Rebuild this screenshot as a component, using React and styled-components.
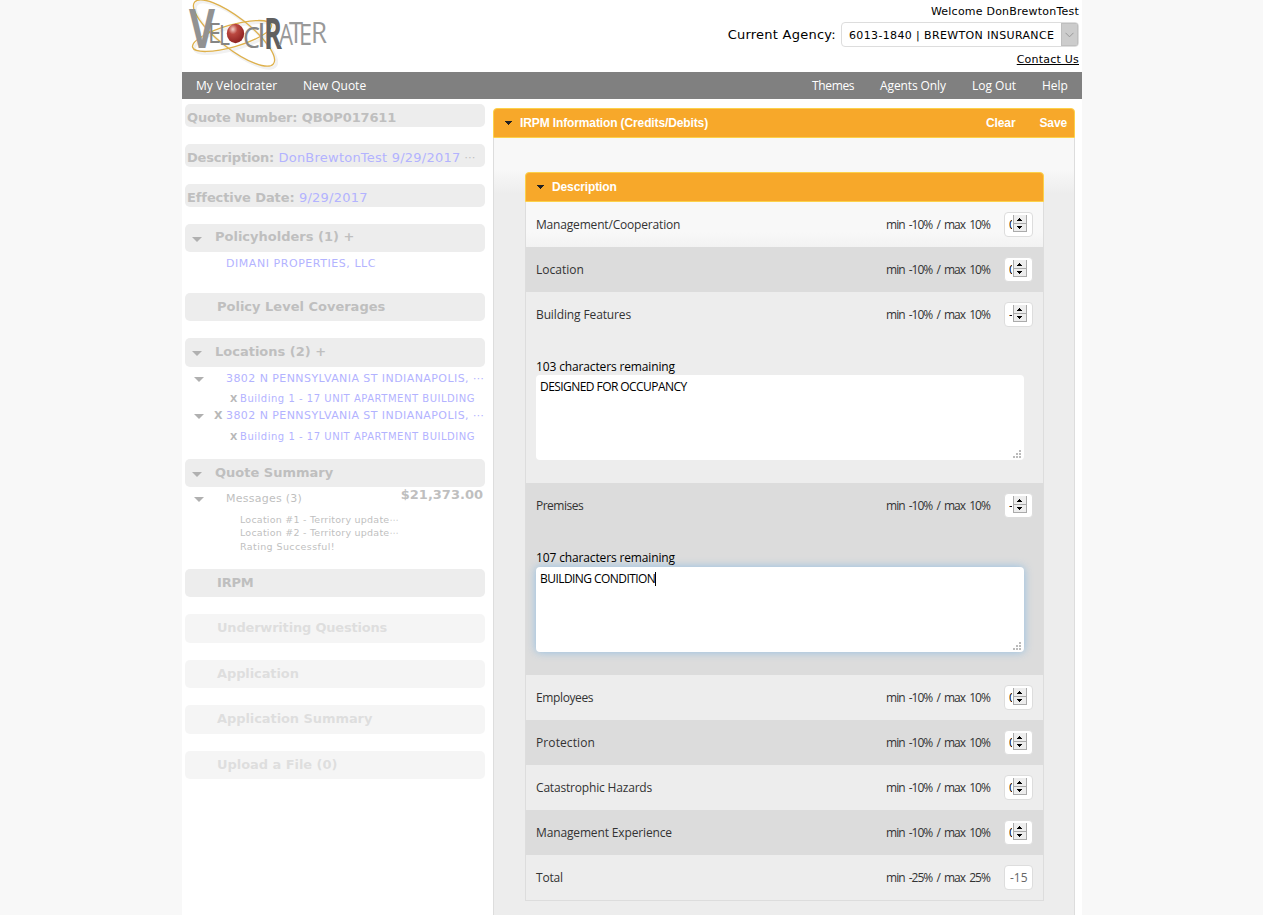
import React from "react";
import styled, { createGlobalStyle, css } from "styled-components";

const Global = createGlobalStyle`
  * { box-sizing: border-box; }
  html, body { margin: 0; height: 915px; overflow: hidden; background: #f8f8f8; }
  body { font-family: "DejaVu Sans", Verdana, sans-serif; color: #000; }
  a { color: inherit; }
`;

const Page = styled.div`
  width: 900px;
  height: 915px;
  margin-left: 182px;
  background: #fff;
  overflow: hidden;
`;
const Header = styled.header`
  height: 72px;
  display: flex;
  justify-content: space-between;
`;
const Logo = styled.svg`
  width: 150px;
  height: 70px;
  margin-left: 2px;
  font-family: "Open Sans", sans-serif;
`;
const Account = styled.div`
  display: flex;
  flex-direction: column;
  align-items: flex-end;
  padding: 4px 3px 0 0;
  font-size: 11px;
  line-height: 16px;
  letter-spacing: 0.22px;
`;
const AgencyRow = styled.label`
  display: flex;
  align-items: center;
  margin: 2px 0 5px;
  gap: 5px;
  font-size: 13px;
  letter-spacing: 0.25px;
`;
const AgencySelect = styled.span`
  display: flex;
  align-items: stretch;
  justify-content: space-between;
  width: 238px;
  height: 25px;
  border: 1px solid #ddd;
  border-radius: 4px;
  padding-left: 7px;
  font-size: 11px;
  line-height: 25px;
  letter-spacing: 0.36px;
  overflow: hidden;
  white-space: nowrap;
`;
const SelectArrow = styled.span`
  flex: none;
  display: flex;
  align-items: center;
  justify-content: center;
  width: 17px;
  background: #ccc;
  border: 1px solid #bfbfbf;
`;
const Nav = styled.nav`
  height: 27px;
  display: flex;
  align-items: center;
  background: #808080;
  color: #fff;
  padding: 0 15px 0 14px;
  gap: 26px;
  font: 12px/27px "Open Sans", "Trebuchet MS", sans-serif;
`;
const NavItem = styled.span`
  width: ${(p) => p.$w}px;
  white-space: nowrap;
  letter-spacing: ${(p) => p.$track || 0}px;
  margin-left: ${(p) => (p.$push ? "auto" : 0)};
`;
const Columns = styled.div`
  display: flex;
  align-items: flex-start;
`;
const Sidebar = styled.aside`
  width: 311px;
  padding: 5px 8px 0 3px;
  color: #bfbfbf;
`;
const Bar = styled.div`
  display: flex;
  align-items: center;
  height: ${(p) => p.$h || 28}px;
  margin-bottom: ${(p) => p.$gap || 17}px;
  padding: 0 0 ${(p) => p.$lift || 1}px ${(p) => p.$indent || 2}px;
  border-radius: 5px;
  background: #ededed;
  font-size: 13px;
  font-weight: bold;
  white-space: pre;
  line-height: 20px;
  letter-spacing: ${(p) => p.$track || 0}px;
  opacity: ${(p) => (p.$faded ? 0.5 : 1)};
  ${(p) => p.$h === 23 && css`padding-top: 4px; padding-bottom: 0;`}
`;
const Value = styled.span`
  color: #b3b3ff;
  font-weight: normal;
  letter-spacing: 0.23px;
`;
const Dots = styled.span`
  margin-left: ${(p) => p.$gap || 0}px;
  font-size: 11px;
  font-weight: normal;
  letter-spacing: 0;
`;
const Toggle = styled.span`
  flex: none;
  width: 0;
  height: 0;
  margin: ${(p) => (p.$row ? "2px 22px 0 9px" : "4px 13px 0 5px")};
  border: 5px solid transparent;
  border-top-color: #b0b0b0;
  border-bottom-width: 0;
`;
const Line = styled.div`
  display: flex;
  align-items: center;
  height: ${(p) => p.$h}px;
  padding-left: ${(p) => p.$indent || 0}px;
  font-size: ${(p) => p.$size || 11}px;
  white-space: pre;
  color: ${(p) => (p.$plain ? "#bfbfbf" : "#b3b3ff")};
  letter-spacing: ${(p) => p.$track || 0}px;
`;
const Remove = styled.b`
  display: inline-block;
  width: ${(p) => p.$w}px;
  margin-left: ${(p) => (p.$outdent ? -p.$w : 0)}px;
  color: #b8b8b8;
  font-size: ${(p) => (p.$outdent ? 11 : 9.5)}px;
  letter-spacing: 0;
`;
const Group = styled.div`
  height: ${(p) => p.$h}px;
`;
const Price = styled.b`
  margin: -7px 2px 0 auto;
  font-size: 13px;
  letter-spacing: 0;
`;
const Panel = styled.section`
  width: 582px;
  height: 807px;
  margin-top: 9px;
`;
const PanelHead = styled.div`
  display: flex;
  align-items: center;
  height: 30px;
  padding: 0 7px 0 11px;
  border: 1px solid #fcd14a;
  border-radius: 4px 4px 0 0;
  background: #f7a82a;
  color: #fff;
  font: bold 12px "Liberation Sans", Arial, sans-serif;
  letter-spacing: -0.12px;
  svg { margin-right: 8px; }
`;
const Action = styled.span`
  margin-left: ${(p) => (p.$first ? "auto" : "24px")};
`;
const PanelBody = styled.div`
  height: 777px;
  padding: 34px 30px 0 31px;
  border: 1px solid #ddd;
  border-width: 0 1px;
  background: linear-gradient(#f8f8f8 0, #f8f8f8 31px, #ededed 56px);
`;
const Rows = styled.div`
  border: 1px solid #ddd;
  border-top: 0;
  background: linear-gradient(#f8f8f8 0, #f8f8f8 30px, #ededed 60px);
  font: 12px/16px "Open Sans", "Trebuchet MS", sans-serif;
  color: #333;
`;
const Row = styled.div`
  height: ${(p) => p.$h || 45}px;
  padding: 10px 10px 0;
  background: ${(p) => (p.$dark ? "#dcdcdc" : "transparent")};
`;
const RowTop = styled.div`
  display: flex;
  align-items: center;
  height: 25px;
`;
const RowLabel = styled.span`
  letter-spacing: ${(p) => p.$track || 0}px;
`;
const Range = styled.span`
  width: 105px;
  margin: 0 13px 0 auto;
  white-space: nowrap;
  letter-spacing: -0.98px;
  word-spacing: 2px;
`;
const NumberBox = styled.span`
  display: flex;
  align-items: center;
  width: 29px;
  height: 25px;
  padding-left: ${(p) => (p.$total ? 5 : 4)}px;
  border: 1px solid #ddd;
  border-radius: 4px;
  background: #fff;
  color: ${(p) => (p.$total ? "#666" : "#000")};
  svg { flex: none; margin-bottom: 2px; }
`;
const Digit = styled.span`
  flex: none;
  width: 3px;
  overflow: hidden;
`;
const Remaining = styled.div`
  margin-top: 32px;
  height: ${(p) => p.$h}px;
  color: #000;
  letter-spacing: -0.14px;
`;
const Note = styled.div`
  display: flex;
  justify-content: space-between;
  width: 488px;
  height: 85px;
  padding: 4px 2px 1px 4px;
  border-radius: 4px;
  background: #fff;
  color: #000;
  font-size: 12px;
  letter-spacing: -0.56px;
  ${(p) => p.$focus && css`box-shadow: 0 0 8px rgba(120, 180, 230, 0.75);`}
  svg { align-self: flex-end; }
`;
const Caret = styled.span`
  display: inline-block;
  width: 1px;
  height: 14px;
  background: #000;
  vertical-align: -3px;
`;

const Spinner = () => (
  <svg width="16" height="19" viewBox="0 0 16 19" shapeRendering="crispEdges">
    <path d="M1 1H15V18H1Z" fill="#ededed" />
    <path d="M1.5 1V18M14.500 1V18M1 9.500H15M1 17.500H15" stroke="#aaa" fill="none" />
    <path d="M7 4h1v1h1v1h1v1H5V6h1V5h1zM5 12h5v1H9v1H8v1H7v-1H6v-1H5z" fill="#000" />
  </svg>
);
const HeadArrow = () => (
  <svg width="7" height="4" viewBox="0 0 7 4" shapeRendering="crispEdges">
    <path d="M0 0H7V1H6V2H5V3H4V4H3V3H2V2H1V1H0Z" fill="#222" />
  </svg>
);
const Grip = () => (
  <svg width="9" height="9" viewBox="0 0 9 9" shapeRendering="crispEdges">
    <path d="M6 0h2v2H6zM3 3h2v2H3zM6 3h2v2H6zM0 6h2v2H0zM3 6h2v2H3zM6 6h2v2H6z" fill="#bbb" />
  </svg>
);

const letters = [
  ["V", 189, 48, 53, "#929292", 26, 700],
  ["E", 208, 43, 27, "#858585", 13, 400],
  ["L", 219, 45, 28, "#858585", 11, 400],
  ["C", 243, 48, 29, "#858585", 17, 400],
  ["I", 257, 47, 32, "#858585", 9, 400],
  ["R", 264, 49, 43, "#606060", 18, 700],
  ["A", 279, 45, 29, "#999", 14, 400],
  ["T", 289, 43, 29, "#999", 14, 400],
  ["E", 299, 45, 29, "#999", 13, 400],
  ["R", 311, 43, 29, "#999", 16, 400],
];

const VelociraterLogo = () => (
  <Logo viewBox="184 0 150 70">
    <defs>
      <radialGradient id="ball" cx="35%" cy="28%" r="75%">
        <stop offset="0" stopColor="#f4cfc8" />
        <stop offset=".35" stopColor="#bb4840" />
        <stop offset="1" stopColor="#8c2020" />
      </radialGradient>
    </defs>
    <g fill="none" strokeWidth="3" stroke="#f1f1f1">
      <ellipse cx="236" cy="35" rx="50" ry="15.500" transform="rotate(38 236 35)" />
      <ellipse cx="234" cy="38" rx="41" ry="11" transform="rotate(-16 234 38)" />
    </g>
    <g fill="none" strokeWidth="1.3" stroke="#deb04a">
      <ellipse cx="234" cy="33" rx="50" ry="15.500" transform="rotate(38 234 33)" />
      <ellipse cx="232" cy="36" rx="41" ry="11" transform="rotate(-16 232 36)" />
    </g>
    {letters.map(([ch, x, y, size, fill, w, weight]) => (
      <text key={ch + x} x={x} y={y} fontSize={size} fill={fill} textLength={w} fontWeight={weight} lengthAdjust="spacingAndGlyphs">{ch}</text>
    ))}
    <ellipse cx="235.500" cy="33.500" rx="8.700" ry="9.700" fill="url(#ball)" />
  </Logo>
);

const factors = [
  { name: "Management/Cooperation", digit: "0", track: -0.18 },
  { name: "Location", digit: "0" },
  { name: "Building Features", digit: "-", track: -0.12, h: 191, left: 103, note: "DESIGNED FOR OCCUPANCY", gap: 16 },
  { name: "Premises", digit: "-", track: -0.5, h: 192, left: 107, note: "BUILDING CONDITION", gap: 17, focus: true },
  { name: "Employees", digit: "0", track: -0.38 },
  { name: "Protection", digit: "0", track: 0.1 },
  { name: "Catastrophic Hazards", digit: "0", track: -0.18 },
  { name: "Management Experience", digit: "0", track: -0.14 },
  { name: "Total", total: true, track: -0.2 },
];

export default function App() {
  return (
    <>
      <Global />
      <Page>
        <Header>
          <VelociraterLogo />
          <Account>
            <span>Welcome DonBrewtonTest</span>
            <AgencyRow>
              Current Agency:
              <AgencySelect>
                6013-1840 | BREWTON INSURANCE
                <SelectArrow>
                  <svg width="9" height="6" viewBox="0 0 9 6"><path d="M.5.8 4.500 4.800 8.500.8" fill="none" stroke="#999" /></svg>
                </SelectArrow>
              </AgencySelect>
            </AgencyRow>
            <a href="#contact">Contact Us</a>
          </Account>
        </Header>
        <Nav>
          <NavItem $w={81} $track={0.06}>My Velocirater</NavItem>
          <NavItem $w={64}>New Quote</NavItem>
          <NavItem $w={42} $push $track={-0.35}>Themes</NavItem>
          <NavItem $w={66} $track={-0.1}>Agents Only</NavItem>
          <NavItem $w={44}>Log Out</NavItem>
          <NavItem $w={25}>Help</NavItem>
        </Nav>
        <Columns>
          <Sidebar>
            <Bar $h={23} $track={-0.14}>Quote Number: QBOP017611</Bar>
            <Bar $h={23} $track={-0.18}>Description: <Value>DonBrewtonTest 9/29/2017</Value><Dots $gap={4}>⋯</Dots></Bar>
            <Bar $h={23} $track={-0.1}>Effective Date: <Value>9/29/2017</Value></Bar>
            <Bar $gap={1} $lift={2}><Toggle />Policyholders (1) +</Bar>
            <Group $h={40}><Line $h={21} $indent={41} $track={0.55}>DIMANI PROPERTIES, LLC</Line></Group>
            <Bar $indent={32}>Policy Level Coverages</Bar>
            <Bar $h={29} $gap={1} $lift={2}><Toggle />Locations (2) +</Bar>
            <Group $h={91}>
              <Line $h={21} $track={0.43}><Toggle $row />3802 N PENNSYLVANIA ST INDIANAPOLIS, <Dots>⋯</Dots></Line>
              <Line $h={19} $indent={45} $size={10} $track={0.52}><Remove $w={10}>X</Remove>Building 1 - 17 UNIT APARTMENT BUILDING</Line>
              <Line $h={15} $track={0.43}><Toggle $row /><Remove $w={12} $outdent>X</Remove>3802 N PENNSYLVANIA ST INDIANAPOLIS, <Dots>⋯</Dots></Line>
              <Line $h={26} $indent={45} $size={10} $track={0.52}><Remove $w={10}>X</Remove>Building 1 - 17 UNIT APARTMENT BUILDING</Line>
            </Group>
            <Bar $gap={1}><Toggle />Quote Summary</Bar>
            <Group $h={81}>
              <Line $h={20} $plain $track={0.25}><Toggle $row />Messages (3)<Price>$21,373.00</Price></Line>
              <Group $h={5} />
              <Line $h={13} $indent={55} $size={9.500} $plain $track={0.23}>Location #1 - Territory update⋯</Line>
              <Line $h={13} $indent={55} $size={9.500} $plain $track={0.23}>Location #2 - Territory update⋯</Line>
              <Line $h={14} $indent={55} $size={9.500} $plain $track={0.4}>Rating Successful!</Line>
            </Group>
            <Bar $indent={32} $track={-0.2}>IRPM</Bar>
            <Bar $indent={32} $h={29} $faded $track={-0.2}>Underwriting Questions</Bar>
            <Bar $indent={32} $faded $track={-0.1}>Application</Bar>
            <Bar $indent={32} $h={29} $faded $track={-0.08}>Application Summary</Bar>
            <Bar $indent={32} $faded $track={-0.05}>Upload a File (0)</Bar>
          </Sidebar>
          <Panel>
            <PanelHead>
              <HeadArrow />IRPM Information (Credits/Debits)
              <Action $first>Clear</Action>
              <Action>Save</Action>
            </PanelHead>
            <PanelBody>
              <PanelHead><HeadArrow />Description</PanelHead>
              <Rows>
                {factors.map((f, i) => (
                  <Row key={f.name} $dark={i % 2 === 1} $h={f.h}>
                    <RowTop>
                      <RowLabel $track={f.track}>{f.name}</RowLabel>
                      <Range>{f.total ? "min -25% / max 25%" : "min -10% / max 10%"}</Range>
                      <NumberBox $total={f.total}>
                        {f.total ? "-15" : <><Digit>{f.digit}</Digit><Spinner /></>}
                      </NumberBox>
                    </RowTop>
                    {f.note && (
                      <>
                        <Remaining $h={f.gap}>{f.left} characters remaining</Remaining>
                        <Note $focus={f.focus}>
                          <span>{f.note}{f.focus && <Caret />}</span>
                          <Grip />
                        </Note>
                      </>
                    )}
                  </Row>
                ))}
              </Rows>
            </PanelBody>
          </Panel>
        </Columns>
      </Page>
    </>
  );
}
